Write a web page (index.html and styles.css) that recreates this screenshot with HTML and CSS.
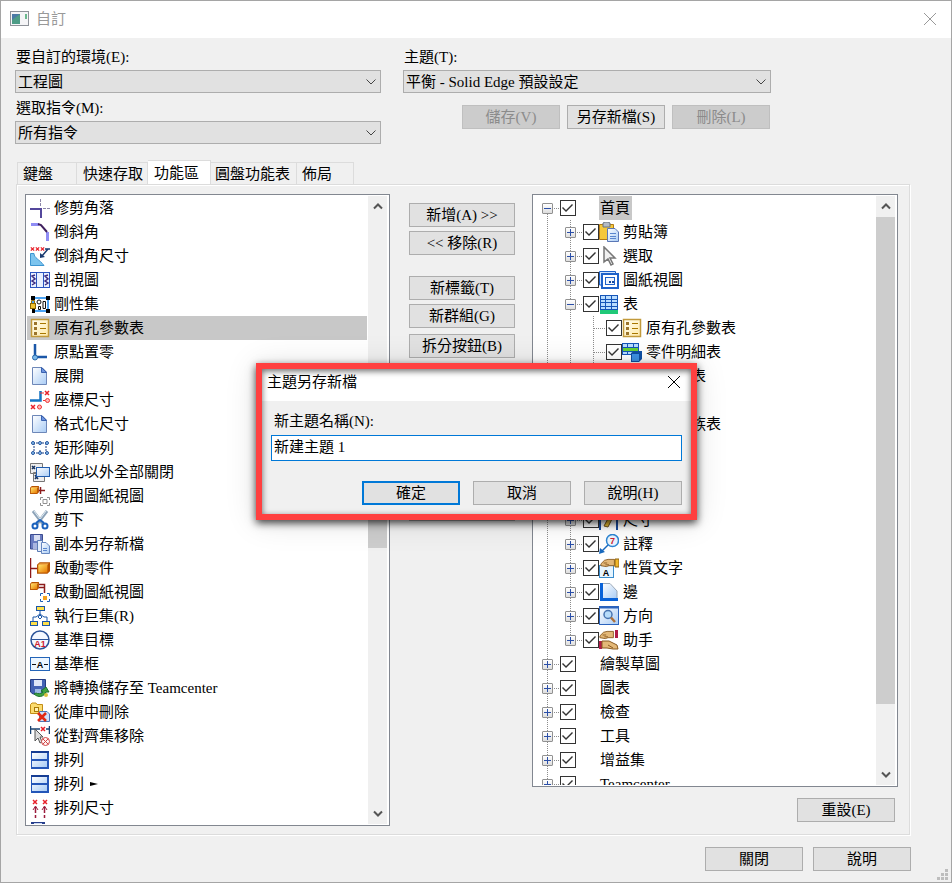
FILE: index.html
```html
<!DOCTYPE html>
<html lang="zh-Hant">
<head>
<meta charset="utf-8">
<title>自訂</title>
<link rel="stylesheet" href="styles.css">
</head>
<body>
<svg class="defs" aria-hidden="true">
  <linearGradient id="gold" x1="0" y1="0" x2="1" y2="1"><stop offset="0" stop-color="#ffe36a"/><stop offset="1" stop-color="#e87800"/></linearGradient>
  <linearGradient id="sky" x1="0" y1="0" x2="1" y2="1"><stop offset="0" stop-color="#fff"/><stop offset="1" stop-color="#a9ccf5"/></linearGradient>
  <linearGradient id="cream" x1="0" y1="0" x2="1" y2="1"><stop offset="0" stop-color="#fffef2"/><stop offset="1" stop-color="#ffe9a8"/></linearGradient>
  <symbol id="i-doc" viewBox="0 0 20 20"><path d="M2.500 1.500H12L16.500 6V18.500H2.500Z" fill="url(#sky)" stroke="#6d87b8"/><path d="M11.500 1.500V6.500H16.500Z" fill="#6d94df" stroke="#3a62b0"/></symbol>
  <symbol id="i-rows" viewBox="0 0 20 20"><path d="M1 1H19V19H1Z" fill="#2456b8"/><path d="M1 1H19V3H1Z" fill="#163d94"/><path d="M2 3H17V9H2ZM2 11H17V17H2Z" fill="url(#sky)"/></symbol>
  <symbol id="i-holes" viewBox="0 0 20 20"><rect x="1.500" y="1.500" width="17" height="17" fill="url(#cream)" stroke="#c29a3c" stroke-width="1.500"/><path d="M10 5.500H16M10 10.500H16M10 15.500H16" stroke="#a87700"/><path d="M4 4H7V7H4ZM4 9H7V12H4ZM4 14H7V17H4Z" fill="#9b742c"/></symbol>
  <symbol id="i-cube" viewBox="0 0 10 9"><path d="M0 2 2 0H10V7L8 9H0Z" fill="#b65300"/><path d="M1 2H8V8H1Z" fill="url(#gold)"/><path d="M1 2 2 1H9L8 2Z" fill="#ffc05a"/></symbol>
  <symbol id="i-xx" viewBox="0 0 6 6"><path d="M1 1 5 5M5 1 1 5" stroke="#e8202a" stroke-width="1.500"/></symbol>
  <symbol id="i-close" viewBox="0 0 14 14"><path d="M1 1 13 13M13 1 1 13" fill="none" stroke="currentColor"/></symbol>
  <symbol id="i-chev" viewBox="0 0 10 6"><path d="M.5.5 5 5 9.500.5" fill="none" stroke="currentColor" stroke-width="1"/></symbol>
  <symbol id="i-arrow" viewBox="0 0 10 7"><path d="M1 1.500 5 5.500 9 1.500" fill="none" stroke="#555" stroke-width="2"/></symbol>
  <symbol id="i-hand" viewBox="0 0 20 10"><path d="M1 6 5 2 9 1H16V8H10L7 9 1 8Z" fill="#e3b878" stroke="#8a5a20"/><path d="M4 5H8M6 7H10" stroke="#8a5a20"/></symbol>
</svg>

<main class="window">
  <header class="titlebar">
    <svg class="app-icon" viewBox="0 0 19 16"><rect x=".5" y=".5" width="18" height="14" fill="#f5f5f7" stroke="#8e9299"/><path d="M2 3H10V13H2Z" fill="#4d9c86"/><path d="M2 3H10L2 9Z" fill="#4b7aa6"/><path d="M16 3V8" stroke="#3da56b" stroke-width="1.500"/></svg>
    <h1>自訂</h1>
    <button class="close" type="button" aria-label="關閉視窗"><svg viewBox="0 0 14 14"><use href="#i-close"/></svg></button>
  </header>

  <section class="options">
    <div class="column">
      <label for="env">要自訂的環境(E):</label>
      <div class="select"><select id="env"><option>工程圖</option></select><svg viewBox="0 0 10 6"><use href="#i-chev"/></svg></div>
      <label for="cmds" class="next">選取指令(M):</label>
      <div class="select"><select id="cmds"><option>所有指令</option></select><svg viewBox="0 0 10 6"><use href="#i-chev"/></svg></div>
    </div>
    <div class="column">
      <label for="theme">主題(T):</label>
      <div class="select"><select id="theme"><option>平衡 - Solid Edge 預設設定</option></select><svg viewBox="0 0 10 6"><use href="#i-chev"/></svg></div>
      <div class="theme-actions">
        <button class="btn" type="button" disabled>儲存(V)</button>
        <button class="btn" type="button">另存新檔(S)</button>
        <button class="btn" type="button" disabled>刪除(L)</button>
      </div>
    </div>
  </section>

  <nav class="tabs" role="tablist">
    <button class="tab tab-keys" role="tab" type="button">鍵盤</button>
    <button class="tab tab-quick" role="tab" type="button">快速存取</button>
    <button class="tab active" role="tab" type="button" aria-selected="true">功能區</button>
    <button class="tab tab-radial" role="tab" type="button">圓盤功能表</button>
    <button class="tab tab-layout" role="tab" type="button">佈局</button>
  </nav>

  <section class="panel">
    <div class="box">
      <ul class="commands">
        <li><svg viewBox="0 0 20 20"><path d="M0 11H11V20" fill="none" stroke="#54479c" stroke-width="2"/><path d="M10.500 1V9M13 10.500H20" stroke="#8c86a8" stroke-dasharray="3 1"/></svg>修剪角落</li>
        <li><svg viewBox="0 0 20 20"><path d="M1 2.500H9M17.500 10V19" stroke="#8f8df5" stroke-width="3"/><path d="M8 2 11 3 17 10" fill="none" stroke="#40215f" stroke-width="2"/></svg>倒斜角</li>
        <li><svg viewBox="0 0 20 20"><path d="M.5 7.500H4C4 12 9 13 14 19.500H.5Z" fill="#7cc4ee" stroke="#3c94d0"/><use href="#i-xx" width="5" height="6"/><use href="#i-xx" x="5" width="5" height="6"/><use href="#i-xx" x="10" width="5" height="6"/><path d="M15 3H20M18 3 12 10" stroke="#1a3b70" stroke-width="1.500"/><path d="M10 12V7L15 11Z" fill="#1a3b70"/></svg>倒斜角尺寸</li>
        <li><svg viewBox="0 0 20 20"><rect x=".5" y="2.500" width="19" height="15" fill="#e8f1ff" stroke="#2c55c0"/><path d="M6.500 3V17M13.500 3V17" stroke="#2c55c0"/><path d="M5 5 2 6 5 9 2 11 5 13 2 15M18 5 15 6 18 9 15 11 18 13 15 15" fill="none" stroke="#3c2c80" stroke-width="1.500"/></svg>剖視圖</li>
        <li><svg viewBox="0 0 20 20"><rect x="3" y="4" width="15" height="13" fill="#fff" stroke="#1387f0" stroke-width="1.500"/><path d="M1 2H5V6H1ZM16 2H20V6H16ZM2 15H5V19H2ZM16 15H20V19H16Z"/><circle cx="9" cy="8" r="2" fill="none" stroke="#111"/><path d="M8.500 12.500H10.500V15.500H8.500ZM13 7.500H15.500V14.500H13Z" fill="#fff" stroke="#111"/><rect x=".5" y="9.500" width="5" height="5" fill="#f2c230" stroke="#8c6500"/><path d="M1.500 9V6.500H4.500V9" fill="none" stroke="#9b7000"/></svg>剛性集</li>
        <li class="selected"><svg viewBox="0 0 20 20"><use href="#i-holes"/></svg>原有孔參數表</li>
        <li><svg viewBox="0 0 20 20"><path d="M5 2V15H17" fill="none" stroke="#1b57a8" stroke-width="2.500"/><circle cx="5" cy="15.500" r="2.500" fill="#7bb9ea" stroke="#2867a8"/></svg>原點置零</li>
        <li><svg viewBox="0 0 20 20"><use href="#i-doc"/></svg>展開</li>
        <li><svg viewBox="0 0 20 20"><path d="M0 10.500H10.500V1" fill="none" stroke="#1474c4" stroke-width="2.500"/><path d="M10 3H14M13 10.500H15" stroke="#e33"/><use href="#i-xx" x="14" width="6" height="6"/><use href="#i-xx" y="14" width="6" height="6"/><circle cx="17.500" cy="10.500" r="2" fill="#fbb" stroke="#e33"/><circle cx="9.500" cy="17" r="2" fill="#fbb" stroke="#e33"/></svg>座標尺寸</li>
        <li><svg viewBox="0 0 20 20"><use href="#i-doc"/></svg>格式化尺寸</li>
        <li><svg viewBox="0 0 20 20"><path d="M3 5H17M3 15H17M4 5V15M16 5V15M10 5V8M10 12V15" stroke="#1d3f82" fill="none" stroke-dasharray="2 1"/><g fill="#8cc4f0" stroke="#26559e"><circle cx="3" cy="5" r="1.500"/><circle cx="10" cy="5" r="1.500"/><circle cx="17" cy="5" r="1.500"/><circle cx="3" cy="15" r="1.500"/><circle cx="10" cy="15" r="1.500"/><circle cx="17" cy="15" r="1.500"/></g></svg>矩形陣列</li>
        <li><svg viewBox="0 0 20 20"><path d="M.5 1.500H12.500V11.500H.5ZM3.500 10.500H14.500V19.500H3.500Z" fill="#eee" stroke="#777"/><path d="M2 4 5 7M5 4 2 7M5 13 8 17M8 13 5 17" stroke="#17335f" stroke-width="1.500"/><rect x="6.500" y="5.500" width="13" height="9" fill="url(#sky)" stroke="#205cae"/></svg>除此以外全部關閉</li>
        <li><svg viewBox="0 0 20 20"><use href="#i-cube" width="9" height="8"/><path d="M9 4.500H15M10.500 1V8" stroke="#8c1c1c" stroke-width="1.500"/><path d="M10.500 14V11.500H13M17 11.500H19.500V14M19.500 17V19.500H17M13 19.500H10.500V17M13 13.500H17V17.500H13Z" stroke="#909090" fill="none"/></svg>停用圖紙視圖</li>
        <li><svg viewBox="0 0 20 20"><path d="M3 1 13 14M17 1 7 14" stroke="#8da3b8" stroke-width="3"/><path d="M4 1 13 13M16 1 7 13" stroke="#e1edf5"/><circle cx="5" cy="16" r="2.500" fill="none" stroke="#1b62bd" stroke-width="2"/><circle cx="15" cy="16" r="2.500" fill="none" stroke="#1b62bd" stroke-width="2"/><path d="M6 13 10 10 14 13" stroke="#1b62bd" stroke-width="2" fill="none"/></svg>剪下</li>
        <li><svg viewBox="0 0 20 20"><path d="M.5.500H12.500V15H.5Z" fill="#687ac0" stroke="#3c4c91"/><path d="M4 1H10V7H4Z" fill="#d9dff2"/><path d="M3 9H10V15H3Z" fill="#a9b5e0"/><path d="M7.500 6.500H12.500V17.500H7.500Z" fill="#e4edfb" stroke="#5b7bb5"/><path d="M11.500 8.500H16L19.500 12V19.500H11.500Z" fill="url(#sky)" stroke="#6687c0"/><path d="M13 14.500H17M13 16.500H17" stroke="#5b86ce"/></svg>副本另存新檔</li>
        <li><svg viewBox="0 0 20 20"><path d="M.5 0V20M1 10.500H8" stroke="#8d1818" stroke-width="1.500"/><use href="#i-cube" x="7" y="4" width="13" height="12"/></svg>啟動零件</li>
        <li><svg viewBox="0 0 20 20"><use href="#i-cube" width="9" height="8"/><path d="M9 2.500H14.500V11M9 5.500H14" stroke="#8c1c1c" stroke-width="1.500" fill="none"/><path d="M10.500 14V11.500H13M17 11.500H19.500V14M19.500 17V19.500H17M13 19.500H10.500V17" stroke="#1c5fb8" fill="none"/><path d="M13 14H17V18H13Z" fill="#f5a21e"/></svg>啟動圖紙視圖</li>
        <li><svg viewBox="0 0 20 20"><path d="M10 5V8L6 11H3V15M10 8 14 11H17V15M8 11 10 13 12 11 10 9Z" fill="none" stroke="#1b57a8"/><g fill="#ffe04a" stroke="#1b57a8"><rect x="6.500" y=".5" width="8" height="4"/><rect x=".5" y="15.500" width="7" height="4"/><rect x="12.500" y="15.500" width="7" height="4"/></g></svg>執行巨集(R)</li>
        <li><svg viewBox="0 0 20 20"><circle cx="10" cy="10" r="9" fill="#f4f8ff" stroke="#2c5499" stroke-width="1.500"/><path d="M1 9.500H19" stroke="#2c5499"/><text x="10" y="17" class="icon-text red">A1</text></svg>基準目標</li>
        <li><svg viewBox="0 0 20 20"><rect x=".5" y="3.500" width="19" height="13" fill="#edf6ff" stroke="#2364b8"/><path d="M2 10.500H6M14 10.500H18" stroke="#111"/><text x="10" y="14" class="icon-text">A</text></svg>基準框</li>
        <li><svg viewBox="0 0 20 20"><path d="M.5 1.500H15.500V16H3L.5 14Z" fill="#4262b4" stroke="#233c82"/><path d="M4 2H12V8H4Z" fill="#dde6f8"/><path d="M5 11H11V16H5Z" fill="#9ebae6"/><path d="M4 16C8 20 14 19 16 14L19 14 16 9 11 13 13 14C11 16 8 16 6 15Z" fill="#3fa341" stroke="#1c7130"/><circle cx="16" cy="17" r="2" fill="#d8c240"/></svg>將轉換儲存至 Teamcenter</li>
        <li><svg viewBox="0 0 20 20"><path d="M.5 2.500 2 1H6L7 2.500H12.500V11.500H.5Z" fill="#fbdc6f" stroke="#c28d16"/><rect x="4.500" y="5.500" width="4" height="4" fill="#fff1b4" stroke="#a87908"/><path d="M9.500 9.500H17L19.500 12V19.500H9.500Z" fill="#cfe2fb" stroke="#4c76b7"/><path d="M8 11 16 19M16 11 8 19" stroke="#e22912" stroke-width="2.500"/></svg>從庫中刪除</li>
        <li><svg viewBox="0 0 20 20"><path d="M.5 0V8M19.500 0V8M1 3H10M16 3H19" stroke="#184271" stroke-width="1.500"/><use href="#i-xx" x="10" y="0" width="6" height="6"/><path d="M5 3V15L8 12 10 17 12 16 10 11H13Z" fill="#ddd" stroke="#555"/><circle cx="15.500" cy="15.500" r="4" fill="#fff4f4" stroke="#cf4444"/><path d="M13 13 18 18M18 13 13 18" stroke="#cf4444"/></svg>從對齊集移除</li>
        <li><svg viewBox="0 0 20 20"><use href="#i-rows"/></svg>排列</li>
        <li><svg viewBox="0 0 20 20"><use href="#i-rows"/></svg>排列<svg class="flyout" viewBox="0 0 8 6"><path d="M0 1 8 3 0 5Z"/></svg></li>
        <li><svg viewBox="0 0 20 20"><use href="#i-xx" x="2" y="1" width="6" height="6"/><use href="#i-xx" x="12" y="1" width="6" height="6"/><path d="M5.500 9V20M14.500 9V20" stroke="#9b1c3c" stroke-width="1.500" stroke-dasharray="6 2"/><path d="M3 12 5.500 8 8 12M12 12 14.500 8 17 12" fill="none" stroke="#9b1c3c"/></svg>排列尺寸</li>
        <li><svg viewBox="0 0 20 20"><path d="M1 0H15V12H1Z" fill="#263e8c"/><path d="M4 1H12V6H4Z" fill="#cbd8f3"/></svg></li>
      </ul>
      <div class="scroll">
        <svg class="up" viewBox="0 0 10 7"><use href="#i-arrow"/></svg>
        <div class="track"><div class="thumb thumb-list"></div></div>
        <svg viewBox="0 0 10 7"><use href="#i-arrow"/></svg>
      </div>
    </div>

    <div class="actions">
      <button class="btn" type="button">新增(A) &gt;&gt;</button>
      <button class="btn" type="button">&lt;&lt; 移除(R)</button>
      <button class="btn group" type="button">新標籤(T)</button>
      <button class="btn" type="button">新群組(G)</button>
      <button class="btn split" type="button">拆分按鈕(B)</button>
      <button class="btn last" type="button" aria-label="重新命名"></button>
    </div>

    <div class="right">
      <div class="box">
        <ul class="tree">
          <li><i class="g first"><button class="ex minus" type="button" aria-label="摺疊"></button></i><label><input type="checkbox" checked><i class="blank"></i><span class="current">首頁</span></label></li>
          <li><i class="v"></i><i class="g"><button class="ex" type="button" aria-label="展開"></button></i><label><input type="checkbox" checked><svg viewBox="0 0 20 20"><path d="M.5 2.500H14.500V17.500H.5Z" fill="#f5c83b" stroke="#b37b13"/><path d="M4 1 6 0H9L11 1V5H4Z" fill="#b4bbc5" stroke="#68727e"/><path d="M8.500 6.500H16L19.500 10V19.500H8.500Z" fill="url(#sky)" stroke="#5a77b6"/><path d="M11 11.500H17M11 14.500H17M11 16.500H17" stroke="#5b86ce"/></svg><span>剪貼簿</span></label></li>
          <li><i class="v"></i><i class="g"><button class="ex" type="button" aria-label="展開"></button></i><label><input type="checkbox" checked><svg viewBox="0 0 20 20"><path d="M5 1V16L9 13 12 19 14 18 11 12H16Z" fill="#f0f0f0" stroke="#777" stroke-width="1.500"/></svg><span>選取</span></label></li>
          <li><i class="v"></i><i class="g"><button class="ex" type="button" aria-label="展開"></button></i><label><input type="checkbox" checked><svg viewBox="0 0 20 20"><path d="M.5 1.500H16.500V15H.5Z" fill="#cfe4ff" stroke="#1e62c9"/><rect x="3" y="4" width="16" height="14" fill="#fff" stroke="#1e62c9" stroke-width="2"/><rect x="6.500" y="7.500" width="9" height="7" fill="#eff6ff" stroke="#1e62c9"/><path d="M10 12H12M13 12H15" stroke="#14479a" stroke-width="2"/></svg><span>圖紙視圖</span></label></li>
          <li><i class="v"></i><i class="g"><button class="ex minus" type="button" aria-label="摺疊"></button></i><label><input type="checkbox" checked><svg viewBox="0 0 20 20"><path d="M1 1H19V19H1Z" fill="#1555b8"/><path d="M2 2H6V5H2ZM7 2H12V5H7ZM13 2H18V5H13ZM2 6H6V8H2ZM7 6H12V8H7ZM13 6H18V8H13ZM2 9H6V12H2ZM7 9H12V12H7ZM13 9H18V12H13ZM2 13H6V15H2ZM7 13H12V15H7ZM13 13H18V15H13Z" fill="#b9ddff"/><path d="M1 16H19V20H1Z" fill="#20c978"/></svg><span>表</span></label></li>
          <li><i class="v"></i><i class="v"></i><i class="g leaf"></i><label><input type="checkbox" checked><svg viewBox="0 0 20 20"><use href="#i-holes"/></svg><span>原有孔參數表</span></label></li>
          <li><i class="v"></i><i class="v"></i><i class="g leaf"></i><label><input type="checkbox" checked><svg viewBox="0 0 20 20"><path d="M0 1H17V13H0Z" fill="#1555b8"/><path d="M1 2H5V5H1ZM6 2H11V5H6ZM12 2H16V5H12Z" fill="#b9ddff"/><path d="M1 10H5V12H1ZM6 10H11V12H6Z" fill="#b9ddff"/><path d="M1 6H16V9H1Z" fill="#67d336"/><path d="M9 11 12 9H20V17L17 20H9Z" fill="#0e4fa4"/><path d="M10 12H17V19H10Z" fill="#3e91e4"/></svg><span>零件明細表</span></label></li>
          <li><i class="v"></i><i class="v"></i><i class="g leaf"></i><label><input type="checkbox" checked><svg viewBox="0 0 20 20"><use href="#i-rows"/></svg><span>折彎列表</span></label></li>
          <li><i class="v"></i><i class="v"></i><i class="g leaf"></i><label><input type="checkbox" checked aria-label="表"><i class="blank"></i></label></li>
          <li><i class="v"></i><i class="v"></i><i class="g leaf"></i><label><input type="checkbox" checked><svg viewBox="0 0 20 20"><use href="#i-rows"/></svg><span>零件家族表</span></label></li>
          <li><i class="v"></i><i class="g"><button class="ex" type="button" aria-label="展開"></button></i><label><input type="checkbox" checked aria-label="圖塊"><i class="blank"></i></label></li>
          <li><i class="v"></i><i class="g"><button class="ex" type="button" aria-label="展開"></button></i><label><input type="checkbox" checked aria-label="插入"><i class="blank"></i></label></li>
          <li><i class="v"></i><i class="g"><button class="ex" type="button" aria-label="展開"></button></i><label><input type="checkbox" checked aria-label="排列"><i class="blank"></i></label></li>
          <li><i class="v"></i><i class="g"><button class="ex" type="button" aria-label="展開"></button></i><label><input type="checkbox" checked><svg viewBox="0 0 20 20"><path d="M1 2V20M18 2V20" stroke="#1a4b9c" stroke-width="2"/><path d="M5 16 12 3 15 5 9 17Z" fill="#e9bd35" stroke="#6c531c"/></svg><span>尺寸</span></label></li>
          <li><i class="v"></i><i class="g"><button class="ex" type="button" aria-label="展開"></button></i><label><input type="checkbox" checked><svg viewBox="0 0 20 20"><path d="M10 10 3 17" stroke="#1768bd" stroke-width="1.500"/><path d="M0 20 1 14 6 18Z" fill="#1768bd"/><circle cx="13.500" cy="6.500" r="6" fill="#eaf5ff" stroke="#2c86d4" stroke-width="1.500"/><text x="13.500" y="10" class="icon-text red">7</text></svg><span>註釋</span></label></li>
          <li><i class="v"></i><i class="g"><button class="ex" type="button" aria-label="展開"></button></i><label><input type="checkbox" checked><svg viewBox="0 0 20 20"><rect x=".5" y="7.500" width="14" height="12" fill="#e6f5ff" stroke="#3a8ccc"/><text x="7" y="18" class="icon-text">A</text><use href="#i-hand" x="1" y="0" width="18" height="10"/><path d="M16 1H20V9H16Z" fill="#f1b82a" stroke="#8e6212"/></svg><span>性質文字</span></label></li>
          <li><i class="v"></i><i class="g"><button class="ex" type="button" aria-label="展開"></button></i><label><input type="checkbox" checked><svg viewBox="0 0 20 20"><path d="M2 2H11L18 9V17H2Z" fill="url(#sky)"/><path d="M3 1.500H11L18 9V17" fill="none" stroke="#9aa8b8"/><path d="M2.500 1V17.500H19" fill="none" stroke="#0962d8" stroke-width="3"/></svg><span>邊</span></label></li>
          <li><i class="v"></i><i class="g"><button class="ex" type="button" aria-label="展開"></button></i><label><input type="checkbox" checked><svg viewBox="0 0 20 20"><rect x=".5" y=".5" width="19" height="18" fill="url(#sky)" stroke="#2a63bd"/><path d="M0 1.500H20" stroke="#2a63bd" stroke-width="2"/><circle cx="9" cy="8.500" r="4" fill="#b7dcfa" stroke="#4874b0" stroke-width="1.500"/><path d="M12 11.500 16 16" stroke="#ad713c" stroke-width="2.500"/></svg><span>方向</span></label></li>
          <li><i class="v"></i><i class="g end"><button class="ex" type="button" aria-label="展開"></button></i><label><input type="checkbox" checked><svg viewBox="0 0 20 20"><use href="#i-hand" width="18" height="10"/><path d="M16 0H19V8H16ZM0 11H3V19H0Z" fill="#b01c48"/><path d="M3 11H10L18 15 19 19 14 19 8 18H3Z" fill="#e3b878" stroke="#8a5a20"/><path d="M9 15 14 18" stroke="#8a5a20"/></svg><span>助手</span></label></li>
          <li><i class="g"><button class="ex" type="button" aria-label="展開"></button></i><label><input type="checkbox" checked><i class="blank"></i><span>繪製草圖</span></label></li>
          <li><i class="g"><button class="ex" type="button" aria-label="展開"></button></i><label><input type="checkbox" checked><i class="blank"></i><span>圖表</span></label></li>
          <li><i class="g"><button class="ex" type="button" aria-label="展開"></button></i><label><input type="checkbox" checked><i class="blank"></i><span>檢查</span></label></li>
          <li><i class="g"><button class="ex" type="button" aria-label="展開"></button></i><label><input type="checkbox" checked><i class="blank"></i><span>工具</span></label></li>
          <li><i class="g"><button class="ex" type="button" aria-label="展開"></button></i><label><input type="checkbox" checked><i class="blank"></i><span>增益集</span></label></li>
          <li><i class="g"><button class="ex" type="button" aria-label="展開"></button></i><label><input type="checkbox" checked><i class="blank"></i><span>Teamcenter</span></label></li>
        </ul>
        <div class="scroll">
          <svg class="up" viewBox="0 0 10 7"><use href="#i-arrow"/></svg>
          <div class="track"><div class="thumb thumb-tree"></div></div>
          <svg viewBox="0 0 10 7"><use href="#i-arrow"/></svg>
        </div>
      </div>
      <button class="btn reset" type="button">重設(E)</button>
    </div>
  </section>

  <footer class="footer">
    <button class="btn" type="button">關閉</button>
    <button class="btn" type="button">說明</button>
    <svg class="grip" viewBox="0 0 11 11"><path d="M8 0H11V3H8ZM4 4H7V7H4ZM8 4H11V7H8ZM0 8H3V11H0ZM4 8H7V11H4ZM8 8H11V11H8Z" fill="#bdbdbd"/></svg>
  </footer>

  <section class="dialog" role="dialog" aria-labelledby="dlg-title">
    <header>
      <h2 id="dlg-title">主題另存新檔</h2>
      <button class="close" type="button" aria-label="關閉對話方塊"><svg viewBox="0 0 14 14"><use href="#i-close"/></svg></button>
    </header>
    <form>
      <label for="name">新主題名稱(N):</label>
      <input id="name" type="text" value="新建主題 1">
      <div class="dialog-actions">
        <button class="btn default" type="button">確定</button>
        <button class="btn" type="button">取消</button>
        <button class="btn" type="button">說明(H)</button>
      </div>
    </form>
  </section>
</main>
</body>
</html>
```
FILE: styles.css
```css
* { box-sizing: border-box; }

body {
  margin: 0;
  color: #000;
  background: #f0f0f0;
  font: 15px/22px "Liberation Serif", "Noto Sans CJK TC", serif;
}

button, input, select { font: inherit; color: inherit; margin: 0; }
ul { list-style: none; margin: 0; padding: 0; }
svg { display: block; flex: none; }
h1, h2 { margin: 0; font-size: 15px; font-weight: 400; }
i { font-style: normal; }

.defs { position: absolute; width: 0; height: 0; }

.window {
  position: relative;
  display: flex;
  flex-direction: column;
  height: 100vh;
  border: 1px solid #a5a5a5;
}

.titlebar {
  display: flex;
  align-items: center;
  height: 37px;
  padding: 0 14px 2px 9px;
  background: #fff;
  color: #999;
}
.app-icon { width: 19px; height: 16px; }
.titlebar h1 { flex: 1; margin-left: 7px; }

.close {
  width: 14px;
  height: 14px;
  padding: 0;
  border: 0;
  background: none;
}
.close svg { width: 14px; height: 14px; }

.options {
  display: grid;
  grid-template-columns: 366fr 368fr 118fr;
  gap: 22px;
  padding: 8px 40px 0 14px;
}
.column { display: flex; flex-direction: column; }
.column label { padding: 0 1px 2px; }
.column .next { margin-top: 4px; }

.select { display: grid; align-items: center; }
.select select, .select svg { grid-area: 1 / 1; }
.select select {
  appearance: none;
  width: 100%;
  height: 23px;
  padding: 0 20px 0 2px;
  border: 1px solid #adadad;
  border-radius: 0;
  background: #e1e1e1;
}
.select svg {
  width: 10px;
  height: 6px;
  margin-right: 5px;
  justify-self: end;
  color: #444;
  pointer-events: none;
}

.btn {
  width: 98px;
  height: 24px;
  padding: 0;
  border: 1px solid #adadad;
  background: #e1e1e1;
  line-height: 20px;
  white-space: nowrap;
}
.btn:disabled { border-color: #bfbfbf; background: #ccc; color: #8b8b8b; }
.btn.default { border: 2px solid #0078d7; line-height: 18px; }

.theme-actions {
  display: flex;
  justify-content: flex-end;
  gap: 7px;
  margin: 12px 1px 0 0;
}

.tabs {
  display: flex;
  align-items: flex-end;
  height: 25px;
  margin: 15px 0 0 16px;
}
.tab {
  height: 22px;
  padding: 0 5px;
  border: 1px solid #dcdcdc;
  border-width: 1px 1px 0 0;
  background: #f0f0f0;
  line-height: 20px;
  text-align: left;
  white-space: nowrap;
}
.tab-keys { width: 60px; border-left-width: 1px; }
.tab-quick { width: 71px; padding-left: 6px; }
.tab-radial { width: 86px; padding: 0 4px; }
.tab-layout { width: 57px; }
.tab.active { width: 63px; height: 24px; padding-left: 6px; background: #fff; }

.panel {
  flex: 1;
  min-height: 0;
  display: grid;
  grid-template-columns: 365fr 106px 366fr;
  grid-template-rows: minmax(0, 1fr);
  column-gap: 18px;
  margin: 0 41px 0 15px;
  padding: 9px 11px 8px 8px;
  border: 1px solid #dcdcdc;
  box-shadow: 1px 1px 0 #fff, inset 1px 1px 0 #fff;
}

.box {
  display: flex;
  min-height: 0;
  padding: 1px;
  border: 1px solid #828790;
  background: #fff;
}

.commands, .tree { flex: 1; min-width: 0; overflow: hidden; }
.commands li, .tree li { display: flex; align-items: center; height: 24px; white-space: nowrap; }
.commands li { gap: 4px; padding-left: 3px; }
.commands li > svg { width: 20px; height: 20px; }
.commands li > .flyout { width: 8px; height: 6px; margin-left: 2px; }
.commands .selected { background: #c8c8c8; }

.icon-text { font: bold 9px "Liberation Sans", sans-serif; text-anchor: middle; }
.icon-text.red { fill: #d02030; }

.scroll {
  display: flex;
  flex-direction: column;
  align-items: center;
  width: 19px;
  margin: 0 1px;
  padding: 7px 0;
  background: #f0f0f0;
}
.scroll svg { width: 10px; height: 7px; }
.scroll .up { transform: rotate(180deg); }
.track { flex: 1; align-self: stretch; margin: 7px 0; }
.thumb { background: #cdcdcd; }
.thumb-list { height: 20%; margin-top: 214px; }
.thumb-tree { height: 89%; }

.actions {
  display: flex;
  flex-direction: column;
  gap: 4px;
  margin: 9px 0 0 1px;
}
.actions .btn { width: 106px; }
.actions .group { margin-top: 17px; }
.actions .split { margin-top: 2px; }
.actions .last { margin-top: 135px; }

.right {
  display: flex;
  flex-direction: column;
  min-height: 0;
}
.right .box { flex: 1; }
.reset { align-self: flex-end; margin: 11px 3px 4px 0; }

.tree li { padding-left: 2px; }
.v, .g {
  flex: none;
  width: 23px;
  height: 24px;
  background: linear-gradient(#8c8c8c 50%, transparent 50%) 11px 0 / 1px 2px repeat-y;
}
.g { display: flex; align-items: center; padding-left: 6px; }
.g::after {
  content: "";
  flex: 1;
  height: 1px;
  background: linear-gradient(90deg, transparent 50%, #8c8c8c 50%) 0 0 / 2px 1px;
}
.leaf { padding-left: 11px; }
.first, .end {
  background:
    linear-gradient(#fff, #fff) 11px 0 / 1px 12px no-repeat,
    linear-gradient(#8c8c8c 50%, transparent 50%) 11px 0 / 1px 2px repeat-y;
}
.end { background-position: 11px 100%, 11px 0; }

.ex {
  width: 11px;
  height: 11px;
  padding: 0;
  border: 1px solid #919191;
  border-radius: 1px;
  background:
    linear-gradient(#2b4fa8, #2b4fa8) center / 7px 1px no-repeat,
    linear-gradient(#2b4fa8, #2b4fa8) center / 1px 7px no-repeat,
    linear-gradient(#fff, #dedede);
}
.ex.minus {
  background:
    linear-gradient(#2b4fa8, #2b4fa8) center / 7px 1px no-repeat,
    linear-gradient(#fff, #dedede);
}

.tree label { display: flex; align-items: center; padding-left: 1px; }
.tree label svg, .blank { width: 20px; height: 20px; }
.tree label span { margin-left: 3px; padding: 0 2px 0 1px; line-height: 24px; }
.tree .current { background: #c8c8c8; }
.tree input {
  appearance: none;
  display: block;
  width: 16px;
  height: 16px;
  border: 1px solid #333;
  background: #fff;
}
.tree input:checked::before {
  content: "";
  display: block;
  width: 14px;
  height: 14px;
  background: #333;
  clip-path: polygon(2px 6px, 5px 9px, 11px 3px, 12px 4px, 5px 11px, 1px 7px);
}

.footer {
  position: relative;
  display: flex;
  justify-content: flex-end;
  gap: 10px;
  padding: 12px 40px 11px;
}
.grip { position: absolute; right: 3px; bottom: 2px; width: 11px; height: 11px; }

.dialog {
  position: absolute;
  left: 255px;
  top: 362px;
  width: 441px;
  border: 6px solid #ff4040;
  background: #f0f0f0;
  box-shadow: 0 3px 8px rgba(0, 0, 0, .75), 0 2px 30px rgba(0, 0, 0, .12);
}
.dialog::after {
  content: "";
  position: absolute;
  inset: 0;
  box-shadow: inset 0 2px 6px rgba(0, 0, 0, .6);
  pointer-events: none;
}
.dialog header {
  display: flex;
  justify-content: space-between;
  align-items: center;
  height: 32px;
  padding: 0 10px 6px 5px;
  background: #fff;
}
.dialog form { display: flex; flex-direction: column; padding: 9px; }
.dialog label { padding: 0 3px 3px; }
.dialog input {
  width: 100%;
  height: 26px;
  padding: 0 2px 5px;
  border: 1px solid #0078d7;
  background: #fff;
  outline: 0;
}
.dialog-actions { display: flex; justify-content: flex-end; gap: 13px; margin-top: 20px; }
```
